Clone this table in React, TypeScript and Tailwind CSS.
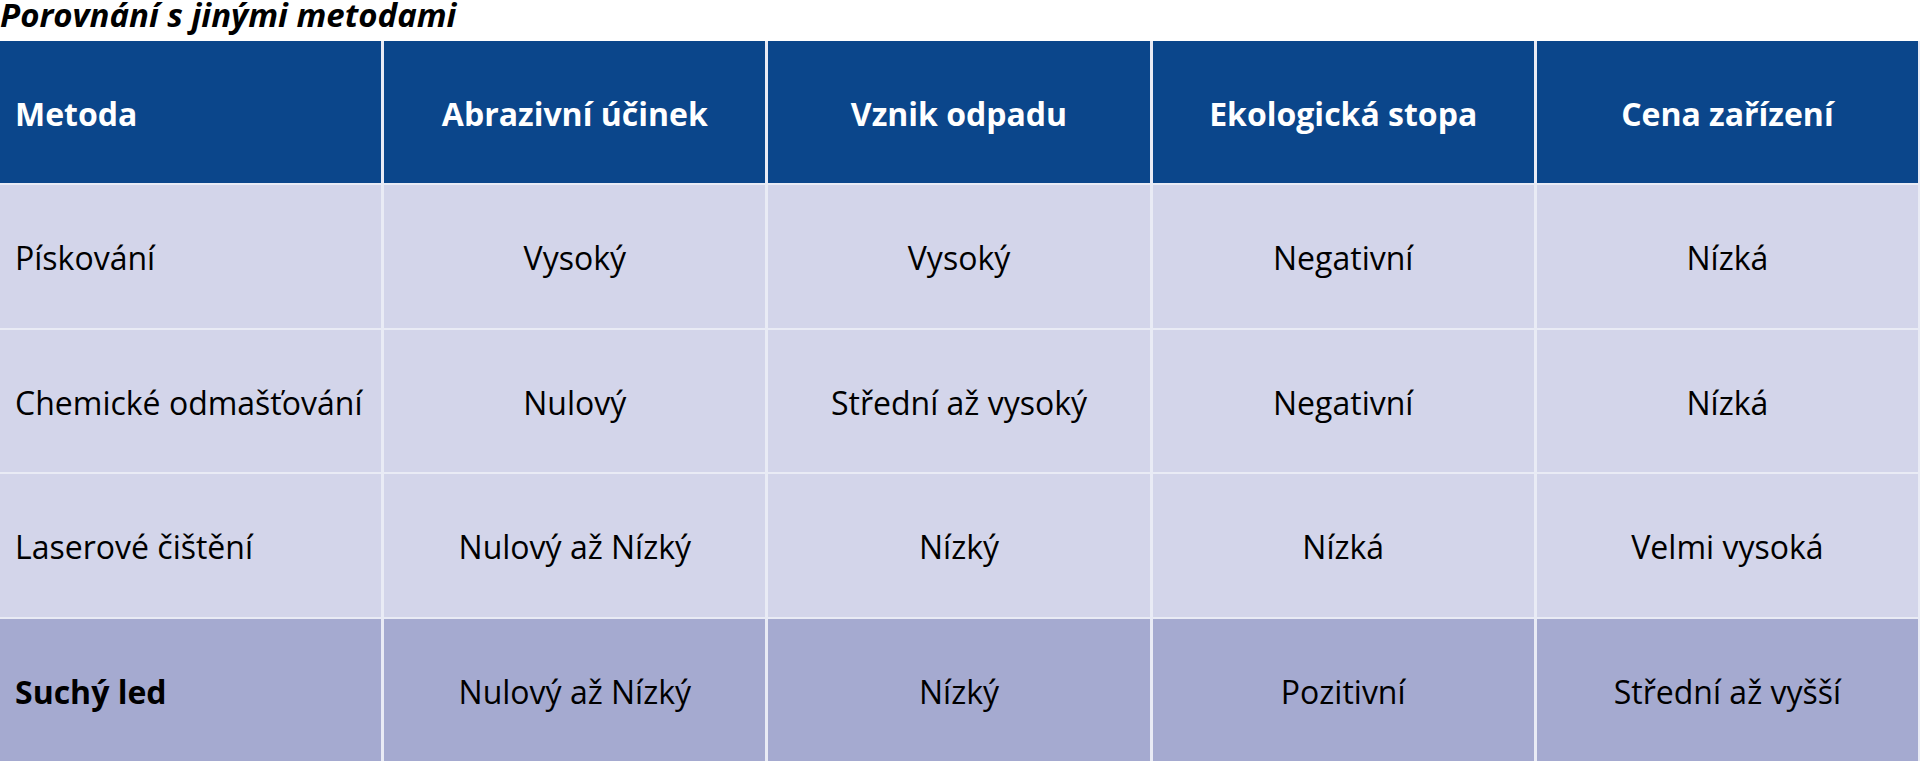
const headers = ["Metoda", "Abrazivní účinek", "Vznik odpadu", "Ekologická stopa", "Cena zařízení"];

const rows = [
  { cells: ["Pískování", "Vysoký", "Vysoký", "Negativní", "Nízká"], highlight: false },
  { cells: ["Chemické odmašťování", "Nulový", "Střední až vysoký", "Negativní", "Nízká"], highlight: false },
  { cells: ["Laserové čištění", "Nulový až Nízký", "Nízký", "Nízká", "Velmi vysoká"], highlight: false },
  { cells: ["Suchý led", "Nulový až Nízký", "Nízký", "Pozitivní", "Střední až vyšší"], highlight: true },
];

export default function App() {
  return (
    <div className="w-[1920px] h-[762px] bg-white overflow-hidden font-['Open_Sans',sans-serif] text-black">
      <h2 className="text-[33px] leading-[30px] font-bold italic mb-[11px]">
        Porovnání s jinými metodami
      </h2>

      <div className="grid grid-cols-5 gap-x-[3px] gap-y-[2px] bg-[#e9ebf5] pr-[2px] w-[1920px]">
        {headers.map((h, i) => (
          <div
            key={h}
            className={
              "h-[142px] bg-[#0b468b] text-white text-[32px] font-bold flex items-center pt-[4px] " +
              (i === 0 ? "justify-start pl-[15px]" : "justify-center")
            }
          >
            {h}
          </div>
        ))}

        {rows.map((row) =>
          row.cells.map((c, i) => (
            <div
              key={row.cells[0] + i}
              className={
                "h-[142.5px] flex items-center pt-[4px] text-[32px] " +
                (row.highlight ? "bg-[#a5aad0] " : "bg-[#d3d5ea] ") +
                (i === 0 ? "justify-start pl-[15px] " : "justify-center ") +
                (i === 0 && row.highlight ? "font-bold" : "font-normal")
              }
            >
              {c}
            </div>
          ))
        )}
      </div>
    </div>
  );
}
